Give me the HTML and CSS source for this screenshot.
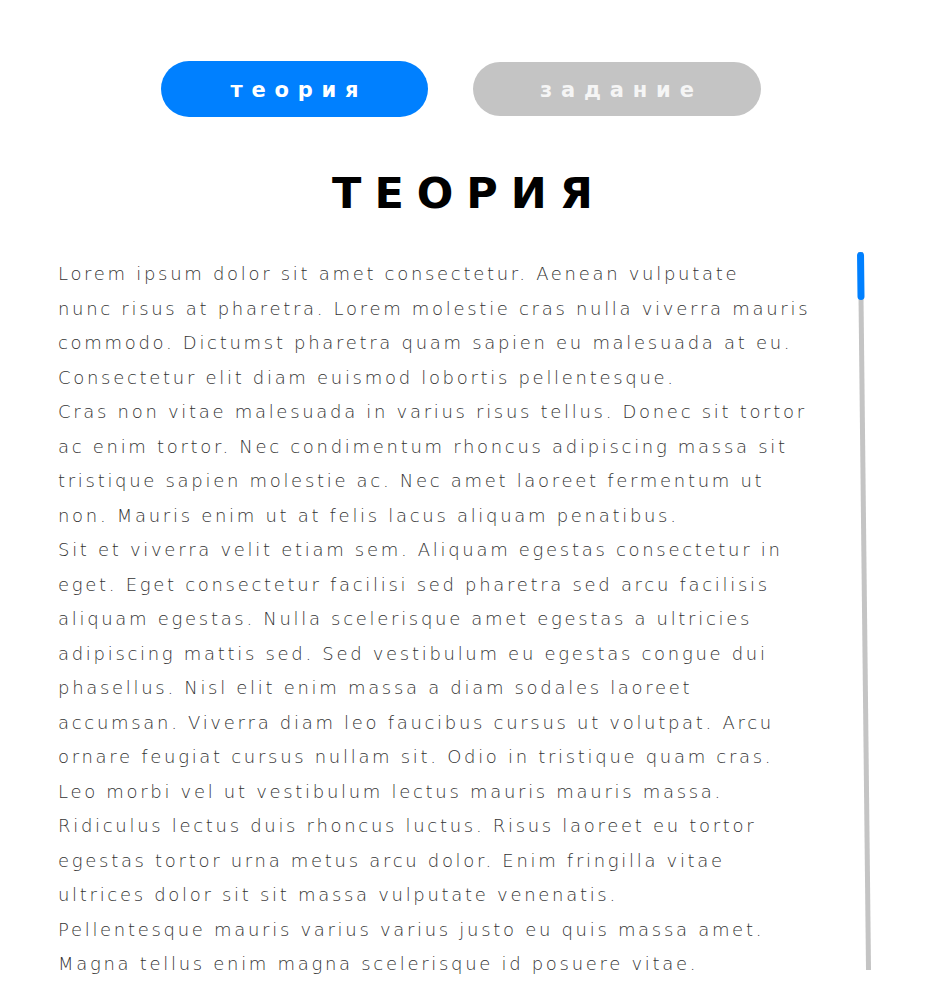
FILE: index.html
```html
<!DOCTYPE html>
<html lang="ru">
<head>
<meta charset="utf-8">
<title>Теория</title>
<link rel="stylesheet" href="styles.css">
</head>
<body>
<div class="page">
  <nav class="tabs">
    <button class="tab tab-active">теория</button>
    <button class="tab tab-idle">задание</button>
  </nav>
  <h1 class="title">ТЕОРИЯ</h1>
  <section class="content">
    <div class="text">
      <span class="line">Lorem ipsum dolor sit amet consectetur. Aenean vulputate</span>
      <span class="line">nunc risus at pharetra. Lorem molestie cras nulla viverra mauris</span>
      <span class="line">commodo. Dictumst pharetra quam sapien eu malesuada at eu.</span>
      <span class="line">Consectetur elit diam euismod lobortis pellentesque.</span>
      <span class="line">Cras non vitae malesuada in varius risus tellus. Donec sit tortor</span>
      <span class="line">ac enim tortor. Nec condimentum rhoncus adipiscing massa sit</span>
      <span class="line">tristique sapien molestie ac. Nec amet laoreet fermentum ut</span>
      <span class="line">non. Mauris enim ut at felis lacus aliquam penatibus.</span>
      <span class="line">Sit et viverra velit etiam sem. Aliquam egestas consectetur in</span>
      <span class="line">eget. Eget consectetur facilisi sed pharetra sed arcu facilisis</span>
      <span class="line">aliquam egestas. Nulla scelerisque amet egestas a ultricies</span>
      <span class="line">adipiscing mattis sed. Sed vestibulum eu egestas congue dui</span>
      <span class="line">phasellus. Nisl elit enim massa a diam sodales laoreet</span>
      <span class="line">accumsan. Viverra diam leo faucibus cursus ut volutpat. Arcu</span>
      <span class="line">ornare feugiat cursus nullam sit. Odio in tristique quam cras.</span>
      <span class="line">Leo morbi vel ut vestibulum lectus mauris mauris massa.</span>
      <span class="line">Ridiculus lectus duis rhoncus luctus. Risus laoreet eu tortor</span>
      <span class="line">egestas tortor urna metus arcu dolor. Enim fringilla vitae</span>
      <span class="line">ultrices dolor sit sit massa vulputate venenatis.</span>
      <span class="line">Pellentesque mauris varius varius justo eu quis massa amet.</span>
      <span class="line">Magna tellus enim magna scelerisque id posuere vitae.</span>
    </div>
    <div class="scrollbar">
      <div class="thumb"></div>
    </div>
  </section>
</div>
</body>
</html>
```
FILE: styles.css
```css
html, body {
  margin: 0;
  padding: 0;
  background: #ffffff;
}
.page {
  width: 929px;
  height: 987px;
  overflow: hidden;
  font-family: "DejaVu Sans", "Liberation Sans", sans-serif;
}
.tabs {
  display: flex;
  align-items: center;
  gap: 45px;
  padding: 61px 0 0 161px;
}
.tab {
  border: none;
  border-radius: 28px;
  color: #ffffff;
  font-family: "DejaVu Sans", "Liberation Sans", sans-serif;
  font-weight: 700;
  font-size: 21px;
  letter-spacing: 8.8px;
  padding: 2px 0 0 8.8px;
  cursor: pointer;
}
.tab-active {
  width: 267px;
  height: 56px;
  background: #0080ff;
}
.tab-idle {
  width: 288px;
  height: 54px;
  background: #c4c4c4;
  color: #f5f5f5;
}
.title {
  margin: 50px 0 0 0;
  text-align: center;
  font-family: "DejaVu Sans", "Liberation Sans", sans-serif;
  font-weight: 700;
  font-size: 43px;
  line-height: 52px;
  letter-spacing: 13px;
  padding-left: 9px;
  color: #000000;
}
.content {
  display: flex;
  margin-top: 38px;
  padding-left: 58px;
  height: 760px;
}
.text {
  width: 797px;
  font-weight: 200;
  font-size: 18px;
  line-height: 34.5px;
  letter-spacing: 2.7px;
  color: #333333;
  overflow: hidden;
}
.line {
  display: block;
  white-space: nowrap;
}
.scrollbar {
  position: relative;
  width: 5px;
  height: 718px;
  margin-left: 3px;
  margin-top: -5px;
  background: #c4c4c4;
  transform: rotate(-0.64deg);
  transform-origin: top center;
}
.thumb {
  position: absolute;
  left: -1px;
  top: 0;
  width: 7px;
  height: 48px;
  border-radius: 4px;
  background: #0080ff;
}
```
